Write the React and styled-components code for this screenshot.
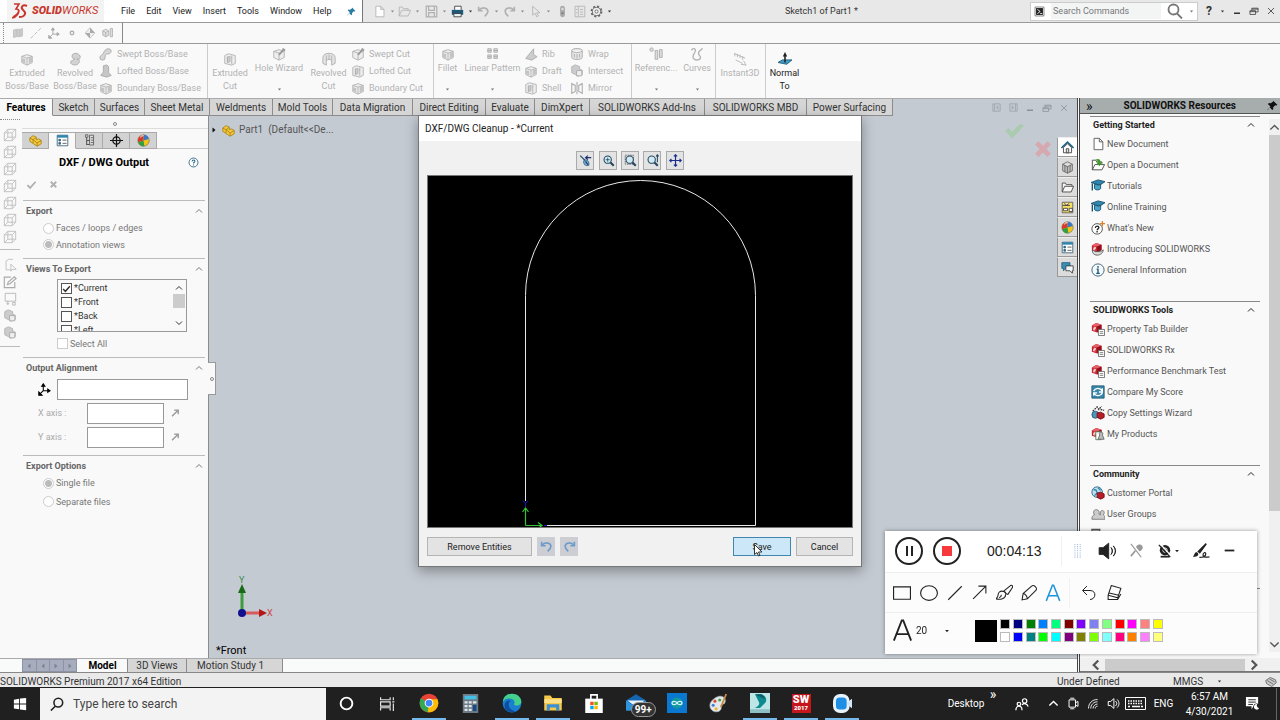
import React, { useState } from "react"
import styled, { createGlobalStyle } from 'styled-components'


const GlobalStyle = createGlobalStyle`
    * {
        box-sizing: border-box;
    }

    body {
        margin: 0;
        overflow: hidden;
        font-family: Roboto, "Open Sans", sans-serif;
        font-size: 9px;
        line-height: 12px;
        color: #222;
    }

    button, input, select {
        font: inherit;
        color: inherit;
        margin: 0;
    }

    button {
        padding: 0;
        border: 0;
        background: transparent;
    }

    h1, h2, h3, ul {
        margin: 0;
        padding: 0;
        font: inherit;
        list-style: none;
    }

    a {
        color: inherit;
        text-decoration: none;
    }

    svg {
        display: block;
        flex: none;
    }
`

/* ---------- icons, all on a 16 x 16 grid ---------- */

const line = { fill: 'none', stroke: 'currentColor', strokeWidth: 1 }

const cube = (
    <>
        <path d="M2 5l6-2 6 2v7l-6 3-6-3z" fill="#eee" stroke="#b0b0b0" />
        <path d="M2 5l6 2 6-2M8 7v8" fill="none" stroke="#b0b0b0" />
    </>
)

const viewCube = <path d="M1.500 5.500h9v9h-9zM5.500 1.500h9v9h-9zM1.500 5.500l4-4M10.500 5.500l4-4M10.500 14.500l4-4M1.500 14.500l4-4" fill="none" stroke="#bdbdbd" />

const redCube = (
    <>
        <path d="M1 4l5-3 6 2v6l-5 3-6-2z" fill="#c8202c" />
        <path d="M1 4l5-3 6 2-5 2z" fill="#e4606a" />
        <path d="M7 5v7l5-3V3z" fill="#8f0f1a" />
        <path d="M3 6h2v1.500h-2v1.500h2" fill="none" stroke="#fff" />
    </>
)

const magnifier = (
    <>
        <circle cx="7" cy="7" r="4.500" fill="#cfeaf5" stroke="#24475e" strokeWidth="1.300" />
        <path d="M10.500 10.500l4 4" stroke="#24475e" strokeWidth="2.600" />
    </>
)

const cap = (
    <>
        <path d="M0 4l8-3 8 2-6 4z" fill="#2f86ae" stroke="#17506c" />
        <path d="M4 6v5c2 2 5 2 7 0V6l-2 1z" fill="#4aa3c8" stroke="#17506c" />
        <path d="M1.500 5v8" stroke="#17506c" strokeWidth="1.500" />
    </>
)

const ball = (
    <>
        <circle cx="8" cy="8" r="7" fill="#f0c419" stroke="#555" strokeWidth=".6" />
        <path d="M8 8L8 1A7 7 0 0 0 1.500 10z" fill="#d93a2b" />
        <path d="M8 8L1.500 10A7 7 0 0 0 9 15z" fill="#2f9e44" />
        <path d="M8 8L8 1A7 7 0 0 1 14.500 6z" fill="#3b78c9" />
        <path d="M4 4a5 5 0 0 1 4-2" stroke="#fff" strokeWidth="1.200" fill="none" />
    </>
)

const part = (
    <>
        <path d="M1 5l4-3 4 2v3l3-1 3 2v4l-5 3-9-6z" fill="#f3c93b" stroke="#a87f12" />
        <path d="M1 5l4 2 4-3M5 7v4M10 15v-4l5-3M10 11l-5-4" fill="none" stroke="#a87f12" />
    </>
)

const propList = (
    <>
        <path d="M1.500 1.500h13v13h-13z" fill="#fff" stroke="#2c5871" />
        <path d="M1.500 1.500h13v3h-13z" fill="#2f86ae" />
        <path d="M3.500 6.500h2v2h-2zM3.500 10.500h2v2h-2z" fill="#2f86ae" stroke="#2c5871" />
        <path d="M8 7.500h5M8 11.500h5" stroke="#444" />
    </>
)

const shapes = {
    pin: <path d="M9 1l6 6-1 1-2-.5-3 3v3l-1.500 1L4 10.500 1 15l-.5-.5L5 9.500 1.500 6l1-1.500 3 .2L9 2z" fill="currentColor" />,
    doc: <path d="M3.500 1.500h6l4 4v9h-10zM9.500 1.500v4h4" fill="#fdfdfd" stroke="currentColor" />,
    open: <path d="M1.500 13.500v-11h4l1 2h6v2M1.500 13.500l3-7h11l-3 7z" {...line} />,
    save: <path d="M1.500 1.500h12l1 1v12h-13zM4.500 1.500v5h7v-5M4.500 14.500v-5h7v5" {...line} strokeWidth="1.500" />,
    print: (
        <>
            <path d="M4.500 6V1.500h8V6" fill="#fff" stroke="#333" />
            <path d="M1 6h14v6H1z" fill="#1e5a78" />
            <path d="M3.500 10.500h9v4h-9z" fill="#e8f4f8" stroke="#333" />
        </>
    ),
    undo: <path d="M2 2v5h5M2.500 6.500c3-4 10-4 11 1 0 3-1 4-4 6.500" {...line} strokeWidth="2" />,
    redo: <path d="M14 2v5H9M13.500 6.500c-3-4-10-4-11 1 0 3 1 4 4 6.500" {...line} strokeWidth="2" />,
    pointer: <path d="M4.500 1.500v11l3-2.500 2 4.500 2-1-2-4h4z" {...line} />,
    light: (
        <>
            <rect x="5" y="1" width="6" height="14" rx="3" fill="#aaa" />
            <circle cx="8" cy="5" r="1.500" fill="#ddd" />
            <circle cx="8" cy="10" r="1.500" fill="#888" />
        </>
    ),
    table: <path d="M2.500 1.500h12v13h-12zM6.500 1.500v13M8.500 5.500h4M8.500 8.500h4M8.500 11.500h4M3.500 5.500h2M3.500 9.500h2" {...line} />,
    gear: (
        <>
            <circle cx="8" cy="8" r="6.300" fill="none" stroke="#666" strokeWidth="2" strokeDasharray="2.600 2.348" />
            <circle cx="8" cy="8" r="5" fill="#f5f5f5" stroke="#555" />
            <circle cx="8" cy="8" r="2" fill="none" stroke="#555" />
        </>
    ),
    plane: <path d="M2 4l4-1v10l-4 1zM7 3h3v10H7zM11 3l3-1v10l-3 1z" fill="#ccc" stroke="#bbb" />,
    axis: <path d="M1 15L15 1" stroke="currentColor" strokeDasharray="5 2" />,
    triad: <path d="M6.500 9.500V2M4.500 4l2-3 2 3zM6.500 9.500h7M12 7.500l3 2-3 2zM6.500 9.500L2 14M1 11v4h4z" stroke="currentColor" strokeWidth="1.300" fill="currentColor" />,
    point: <circle cx="8" cy="8" r="2.500" fill="#eee" stroke="#aaa" strokeWidth="1.500" />,
    com: (
        <>
            <path d="M8 1l6.500 7L8 15 1.500 8z" fill="#eee" stroke="#bbb" />
            <path d="M8 1v7h6.500zM8 15V8H1.500z" fill="#aaa" />
        </>
    ),
    mate: <path d="M1 5l4-2 4 2v6l-4 2-4-2zM1 5l4 2 4-2M5 7v6M11 2h3v11h-3z" fill="#ddd" stroke="#aaa" />,
    boss: <>{cube}<path d="M2 7l4 1v5l-4-2zM10 6h4v5l-4 2z" fill="#c4c4c4" /></>,
    revolve: <path d="M5 3c3-3 9-1 9 3 0 2-2 3-4 2 3 0 4 3 2 5-2 3-9 2-9-1 0-3 3-2 5-4-3 0-4-2-3-5z" fill="#d3d3d3" stroke="#aaa" />,
    sweep: <path d="M1 12a3 3 0 0 0 6 0c0-3 0-4 3-4 5 0 5-6 1-6s-5 3-6 5c0 2-4 2-4 5z" fill="#d6d6d6" stroke="#aaa" />,
    loft: <path d="M5 2l4-1 2 2v7l3 3-5 2-7-2 3-4z" fill="#c6c6c6" stroke="#aaa" />,
    hole: <>{cube}<path d="M8 9l6-7M12 2l3 2" stroke="#999" strokeWidth="2" /></>,
    cut: (
        <>
            <path d="M2 4l4-2 8 2v9l-4 2-8-2z" fill="#eee" stroke="#b0b0b0" />
            <path d="M5 5v7M10 6v8M5 6l3-1v6l-3 1zM10 4v3" fill="#ccc" stroke="#b0b0b0" />
        </>
    ),
    revolveCut: (
        <>
            <path d="M1 6c0-6 14-6 14 0v7l-4 2v-5c0-2-6-2-6 0v5l-4-2z" fill="#e2e2e2" stroke="#b0b0b0" />
            <path d="M5 4v6M11 4v6M8 3v6" stroke="#b0b0b0" />
        </>
    ),
    curve: <path d="M2 4c0-3 5-3 4 1-1 3-4 5-2 8s8 2 8-1c0-2-3-3-2-6s4-2 4-5" {...line} strokeWidth="1.500" />,
    pattern: <path d="M2 2h4v4H2zM9 2h4v4H9zM2 9h4v4H2zM9 9h4v4H9zM2 4h4M9 4h4M2 11h4M9 11h4" fill="#ddd" stroke="#aaa" />,
    rib: <path d="M2 13l9-11v7l4 2-6 4z" fill="#ccc" stroke="#aaa" />,
    wrap: <path d="M2 4c0-3 12-3 12 0v8c0 3-12 3-12 0zM2 4c0 3 12 3 12 0M5 8v4M8 8v5M11 8v4" fill="#e5e5e5" stroke="#aaa" />,
    mirror: <path d="M2 3l4 2v7l-4 2zM14 3l-4 2v7l4 2zM8 1v14" fill="none" stroke="#b0b0b0" strokeWidth="1.300" />,
    refGeo: <path d="M1 3a2 2 0 1 0 4 0 2 2 0 1 0-4 0M7 4h3v10H7zM12 3h3v9h-3z" fill="#ddd" stroke="#aaa" />,
    instant: <path d="M2 2l12 5M2 5V1M5 6V2M8 7V3M11 9V5M3 9l8 4M12 10l3 5-6-1" {...line} />,
    normalTo: (
        <>
            <path d="M0 12l5-3h11l-6 5z" fill="#3e9bc6" stroke="#1c5b7c" />
            <path d="M8 12V3" stroke="#222" strokeWidth="1.800" />
            <path d="M5.500 5L8 0l2.500 5z" fill="#222" />
        </>
    ),
    viewCube,
    sketchTool: <path d="M3.500 13.500v-10l3-2h5M3.500 13.500h6M9 7v8l2-2h4z" fill="none" stroke="#bdbdbd" />,
    edit: <path d="M13.500 8v6.500h-12v-12H9M5 11l1-3 7-6 2 2-7 6z" fill="none" stroke="#aaa" strokeWidth="1.300" />,
    hang: <path d="M2.500 1.500h12v9h-12zM5.500 10v4M4 12.500l1.500 2 1.500-2M11 12h3v3h-3z" fill="none" stroke="#b5b5b5" />,
    blocks: (
        <>
            <path d="M2 3l4-2 5 2v3l3 1v5l-5 2-3-2-4-2z" fill="#ccc" stroke="#b0b0b0" />
            <path d="M7.500 7.500h6v6h-6z" fill="#eee" stroke="#aaa" />
        </>
    ),
    part,
    propList,
    tree: (
        <>
            <path d="M3 1h3v3H3zM8 1.500h5v12H8z" fill="#ddd" stroke="#555" />
            <path d="M4.500 4v9H8M4.500 8H8" fill="none" stroke="#555" strokeWidth="1.300" />
            <path d="M9.500 4.500h3M9.500 7.500h3M9.500 10.500h3" stroke="#555" />
        </>
    ),
    target: (
        <>
            <circle cx="8" cy="8" r="4.500" fill="none" stroke="#111" strokeWidth="1.500" />
            <path d="M8 0v16M0 8h16" stroke="#111" strokeWidth="1.500" />
        </>
    ),
    ball,
    help: (
        <>
            <circle cx="8" cy="8" r="6.500" fill="#fff" stroke="#2b6680" strokeWidth="1.300" />
            <path d="M6 6.500c0-3 4.500-2.500 4 0-.3 1.200-2 1.200-2 3M8 11v1.300" {...line} stroke="#2b6680" strokeWidth="1.600" />
        </>
    ),
    check: <path d="M2 9l4 4 8-9" {...line} strokeWidth="2.600" />,
    bigCheck: <path d="M0 8l3-2 3 3 7-7 3 2-10 11z" fill="currentColor" />,
    cross: <path d="M4 4l8 8M12 4l-8 8" {...line} strokeWidth="2.600" />,
    bigCross: <path d="M1 4l3-3 4 4 4-4 3 3-4 4 4 4-3 3-4-4-4 4-3-3 4-4z" fill="currentColor" />,
    up: <path d="M2 11l6-6 6 6" {...line} strokeWidth="2" />,
    down: <path d="M2 5l6 6 6-6" {...line} strokeWidth="2" />,
    left: <path d="M11 2L5 8l6 6" {...line} strokeWidth="3" />,
    right: <path d="M5 2l6 6-6 6" {...line} strokeWidth="3" />,
    caret: <path d="M3 5h10l-5 6z" fill="currentColor" />,
    play: <path d="M5 3v10l6-5z" fill="currentColor" />,
    flip: <path d="M3 12l8-8M6 3h6v6" {...line} strokeWidth="2" />,
    min: <path d="M2 12.500h12" stroke="currentColor" strokeWidth="3" />,
    dash: <path d="M1 8h14" stroke="currentColor" strokeWidth="2.600" />,
    restore: <path d="M1.500 7.500h9v6h-9zM4.500 7V3.500h10v6H11M1.500 9h9M4.500 5h10" {...line} strokeWidth="1.200" />,
    close: <path d="M2 2l12 12M14 2L2 14" {...line} strokeWidth="1.600" />,
    paneLeft: <path d="M1.500 1.500h13v13h-13zM4.500 2v12M10.500 5L7.500 8l3 3z" {...line} />,
    paneRight: <path d="M1.500 1.500h13v13h-13zM11.500 2v12M5.500 5l3 3-3 3z" {...line} />,
    search: <path d="M1.500 6.500a5 5 0 1 0 10 0 5 5 0 1 0-10 0M10 10.500l5 5" {...line} strokeWidth="1.800" />,
    console: (
        <>
            <path d="M1.500 1.500h13v13h-13z" fill="#fff" stroke="#555" />
            <path d="M3 3h10v10H3z" fill="#222" />
            <path d="M5 5l4 3-4 3M9 11h3" stroke="#fff" strokeWidth="1.300" fill="none" />
        </>
    ),
    home: (
        <>
            <path d="M3 8v6.500h10V8L8 3.500z" fill="#fff" stroke="#333" />
            <path d="M0.500 8.500L8 1.500l7.500 7" {...line} stroke="#1f6584" strokeWidth="2" />
            <path d="M6.500 9.500h3v5h-3z" fill="#ddd" stroke="#333" />
        </>
    ),
    library: <path d="M2 4l6-3 6 3v8l-6 3-6-3zM2 4l6 3 6-3M8 7v8M4 5v8M6 6v8M10 6v8M12 5v8" fill="#ddd" stroke="#444" strokeWidth=".8" />,
    folder: <path d="M1.500 13.500v-11h4l1 2h7v2M1.500 13.500l3-7h11l-3 7z" fill="#f7f7f7" stroke="#555" strokeWidth="1.200" />,
    palette: (
        <>
            <path d="M1.500 1.500h13v13h-13z" fill="#f6df62" stroke="#555" />
            <path d="M2 5.500h9M4 3l3 2 3-2M3 9h5v3H3zM10 9h4v4h-4z" fill="#fff" stroke="#333" />
        </>
    ),
    chat: (
        <>
            <path d="M1 2h10v7H6l-3 3V9H1z" fill="#3b8fb5" stroke="#1c5b7c" />
            <path d="M6 6h9v6h-1v3l-3-3H6z" fill="#eef7fa" stroke="#333" />
        </>
    ),
    openArrow: (
        <>
            <path d="M1.500 13.500v-11h4l1 2h6v2M1.500 13.500l3-6h11l-3 6z" fill="#fff" stroke="#444" />
            <path d="M5 2c4-2 6 0 6 3h2L9.500 9 6 5h2c0-2-1-2-3-3z" fill="#3f9b28" />
        </>
    ),
    cap,
    whatsNew: (
        <>
            <circle cx="7" cy="9" r="6" fill="#fff" stroke="#444" />
            <path d="M5 8c0-3 4-2.500 4-.5 0 1.500-2 1.500-2 3M7 11.500v1.500" {...line} stroke="#222" strokeWidth="1.500" />
            <path d="M13 0v6M10 3h6" stroke="#d9822b" strokeWidth="1.500" />
        </>
    ),
    introCube: (
        <>
            {redCube}
            <path d="M2 9c-1 3 1 6 5 6s7-3 7-6l-3 2H5z" fill="#ddd" stroke="#555" />
        </>
    ),
    info: (
        <>
            <circle cx="8" cy="8" r="7" fill="#f3f9fc" stroke="#33566b" />
            <path d="M6.500 7H8v4.500M6 11.800h4M8 3.500v1.800" {...line} stroke="#1d5a7c" strokeWidth="1.600" />
        </>
    ),
    toolCube: (
        <>
            {redCube}
            <path d="M8.500 8.500h7v7h-7z" fill="#fff" stroke="#666" />
            <path d="M10 11h4M10 13h4" stroke="#777" />
        </>
    ),
    score: (
        <>
            <path d="M1 1h14v14H1z" fill="#3b87ab" stroke="#1d5873" />
            <path d="M3 7c2-4 7-4 9-1l1-2v4H9M13 9c-2 4-7 4-9 1l-1 2V9h4" fill="none" stroke="#fff" strokeWidth="1.500" />
        </>
    ),
    wizard: (
        <>
            <path d="M2 6l5-5 2 3 3-4M11 4l4 1" stroke="#333" strokeWidth="1.500" strokeDasharray="2 1" fill="none" />
            <circle cx="5" cy="10" r="4" fill="#4a97ba" stroke="#225a75" />
            <path d="M7 8l4-1 4 2v4l-4 2-4-2z" fill="#b51d28" stroke="#7d0d16" />
        </>
    ),
    products: (
        <>
            {redCube}
            <path d="M5.500 5.500h6v9h-6z" fill="#fff" stroke="#4d7d4d" />
            <path d="M10 9a2 2 0 1 1 3 0l2 5H8z" fill="#bbb" stroke="#666" />
        </>
    ),
    portal: (
        <>
            <circle cx="7" cy="7" r="6" fill="#bfe0ee" stroke="#235f7d" />
            <path d="M3 4l3 1 1 3-3 3M8 2l3 3" stroke="#2f86ae" strokeWidth="1.600" fill="none" />
            <path d="M7 8l4-1 4 2v4l-4 2-4-2z" fill="#b51d28" stroke="#7d0d16" />
        </>
    ),
    users: <path d="M1 14c0-4 2-5 3-5-2-3-1-6 2-6s4 3 3 5l2 1c-1-3 0-5 2-5s3 3 1 5c2 1 2 3 2 5z" fill="#ccc" stroke="#777" />,
    board: <path d="M1 1.500h9v10H1zM1 3.500h9" fill="#eee" stroke="#555" strokeWidth="1.400" />,
    broom: (
        <>
            <path d="M1.500 2l7 7" stroke="#1d4f74" strokeWidth="1.600" />
            <path d="M6 8c4-2 7 1 6 6-4 1-7-1-6-6z" fill="#7fb7d8" stroke="#1d4f74" />
            <path d="M8 9l3 4M8 4.500h7M11 2L8 4.500 11 7" fill="none" stroke="#1b2f6b" strokeWidth="1.400" />
        </>
    ),
    zoomFit: <>{magnifier}<path d="M4.500 7h5M7 4.500v5" stroke="#24475e" /></>,
    zoomArea: <><path d="M1.500 1.500h10v11h-10z" fill="none" stroke="#555" strokeDasharray="2 1" />{magnifier}</>,
    zoomInOut: <>{magnifier}<path d="M14 1v9M12.500 3L14 1l1.500 2" stroke="#24475e" fill="none" strokeWidth="1.300" /></>,
    pan: <path d="M8 1v14M1 8h14M6 3l2-2 2 2M6 13l2 2 2-2M3 6L1 8l2 2M13 6l2 2-2 2" fill="none" stroke="#1b2f8f" strokeWidth="1.500" />,
    rect: <path d="M0.500 2.500h15v11h-15z" {...line} />,
    ellipse: <ellipse cx="8" cy="8" rx="7.500" ry="6.500" {...line} />,
    diagonal: <path d="M2 14L14 2" {...line} />,
    arrow: <path d="M2 14L14 2M7 2h7v7" {...line} />,
    brush: <path d="M7 7l6-5c2-2 3.500 0 2 2L11 10M7 7l4 3M7 7c-3-1-5 1-5 3s-1 3-2 4c4 1 9 0 9-4M7 7c2 0 2.500 1.500 2 3M5 10c0 2-1 2-2 3" {...line} />,
    pencil: <path d="M1 15l1-6 8-7c2-2 6 2 4 4l-8 8zM2 9c2 0 4 3 4 5" {...line} />,
    text: <path d="M2 15L7.500 1h1L14 15M4 10.500h8" {...line} strokeWidth="1.300" />,
    back: <path d="M6 1L1.500 5.500 6 10M2 5.500h7c7 0 6 9 0 9" {...line} />,
    eraser: <path d="M5 1.500l9 2.500-3 9-9-2.500zM3 8.500l9 2M2 10.500v4h9l3-5M11 13v1.500" {...line} />,
    speaker: <path d="M1 5h3.500l5-4v14l-5-4H1zM11.500 5c1.500 1.500 1.500 4.500 0 6h.2c1.500-1.500 1.500-4.500 0-6zM13.500 3.500c2.500 3 2.500 6 0 9h.2c2.500-3 2.500-6 0-9z" fill="currentColor" stroke="currentColor" strokeWidth=".8" />,
    waves: <path d="M1.500 5.500h3l4-3.500v12l-4-3.500h-3zM10.500 5c2 2 2 4 0 6M12.500 3c3 3 3 7 0 10" {...line} strokeWidth="1.200" />,
    micOff: (
        <>
            <path d="M7 8c-1-6 5-8 7-5s-1 6-4 6z" fill="currentColor" />
            <path d="M7 8l-5 6" stroke="currentColor" strokeWidth="1.800" />
            <path d="M3 1l11 14" stroke="#fff" strokeWidth="3" />
            <path d="M2 1l11 14" stroke="currentColor" strokeWidth="1.200" />
        </>
    ),
    camOff: (
        <>
            <circle cx="8" cy="7" r="6" fill="currentColor" />
            <path d="M3 14.500h10" stroke="currentColor" strokeWidth="2" />
            <circle cx="8" cy="7" r="2.500" fill="none" stroke="#fff" />
            <path d="M2.500 0l13 14" stroke="#fff" strokeWidth="1.500" />
            <path d="M1 1l13 14" stroke="currentColor" strokeWidth="1.500" />
        </>
    ),
    sign: (
        <>
            <path d="M0 14l2-4c2-1 3 0 3 2-1 2-3 2-5 2zM4 9l8-8 1 1-6.500 9z" fill="currentColor" />
            <path d="M6 14.500c4 0 6-1 6-3.500 0-2-3-1-2.500 1.500s3 2 6 1.500" {...line} strokeWidth="1.100" />
        </>
    ),
    grip: <path d="M4.500 0v16M7.500 0v16M10.500 0v16" fill="none" stroke="#a3bde0" strokeWidth="1.200" strokeDasharray="1.200 1.200" />,
    windows: <path d="M1 3l6-1v5.500H1zM8 1.800L15 1v6.500H8zM1 8.500h6V14l-6-1zM8 8.500h7V15l-7-.8z" fill="#fff" />,
    ring: <circle cx="8" cy="8" r="5.500" fill="none" stroke="#fff" strokeWidth="1.800" />,
    taskView: <path d="M1.500 2v2.500h9V2M1.500 6.500h9v4h-9zM1.500 14.500V12h9v2.500M13.500 2v3M13.500 8v7M12.500 6.500h2" fill="none" stroke="#e5e5e5" strokeWidth="1.100" />,
    chrome: (
        <>
            <circle cx="8" cy="8" r="7.500" fill="#ea4335" />
            <path d="M8 8L1.500 4.200A7.500 7.500 0 0 0 7 15.400z" fill="#34a853" />
            <path d="M8 8l-1 7.400A7.500 7.500 0 0 0 14.800 5H8z" fill="#fbbc05" />
            <circle cx="8" cy="8" r="3.500" fill="#fff" />
            <circle cx="8" cy="8" r="2.700" fill="#4285f4" />
        </>
    ),
    calc: (
        <>
            <rect x="1.500" y="0" width="13" height="16" fill="#6d7a85" />
            <path d="M3 1.500h10v3H3z" fill="#43c0e8" />
            <path d="M3 6h2.500v2H3zM6.500 6H9v2H6.500zM10 6h3v2h-3zM3 9.200h2.500v2H3zM6.500 9.200H9v2H6.500zM3 12.400h2.500v2H3zM6.500 12.400H9v2H6.500z" fill="#dfe6ea" />
            <path d="M10 9.200h3v5.200h-3z" fill="#164a84" />
        </>
    ),
    edge: (
        <>
            <circle cx="8" cy="8" r="7.500" fill="#1b7fd1" />
            <path d="M.6 7C1.500 2 5 .5 8 .5c5 0 7.500 3.500 7.500 6.500s-5 4-6 2c1-1 1-4-2.500-4.500C4 4 2 5 .6 7z" fill="#45cf8c" />
            <path d="M7 6c-3 2-2 8 4 8.500A7.500 7.500 0 0 1 3 13.500C.5 9 3 5.500 7 6z" fill="#0d4f9e" />
        </>
    ),
    explorer: (
        <>
            <path d="M1 2h5l1.500 2H15v10H1z" fill="#f7c948" />
            <path d="M1 5h14v3H1z" fill="#fbe08a" />
            <path d="M3 14V9h10v5h-2.500v-2.500h-5V14z" fill="#3b8fd6" />
        </>
    ),
    store: (
        <>
            <path d="M5.500 5V1.500h5V5" fill="none" stroke="#fff" strokeWidth="1.300" />
            <path d="M1 4.500h14V16H1z" fill="#fff" />
            <path d="M5 7h2.700v2.700H5z" fill="#f25022" />
            <path d="M8.300 7H11v2.700H8.300z" fill="#7fba00" />
            <path d="M5 10.300h2.700V13H5z" fill="#00a4ef" />
            <path d="M8.300 10.300H11V13H8.300z" fill="#ffb900" />
        </>
    ),
    mail: (
        <>
            <path d="M0 6l8-5 8 5v8H0z" fill="#1566b0" />
            <path d="M1 6l7 5 7-5z" fill="#e9f3fb" />
            <path d="M0 6l8 5.500L16 6v8H0z" fill="#2b95e0" />
        </>
    ),
    arduino: (
        <>
            <path d="M0 0h16v16H0z" fill="#0a78d0" />
            <circle cx="8" cy="8" r="4.500" fill="#12999f" />
            <path d="M8 8c-1-1.700-4-1.700-4 0s3 1.700 4 0 4-1.700 4 0-3 1.700-4 0z" fill="none" stroke="#d4f3f3" strokeWidth="1" />
        </>
    ),
    paint: (
        <>
            <path d="M8 2c5-1 7 3 5 6-1 1-3 0-3 2 1 3-1 5-4 5-4 0-6-4-5-7s4-5 7-6z" fill="#e4e9ee" stroke="#b3bfc8" strokeWidth=".5" />
            <circle cx="5" cy="6" r="1.300" fill="#e2483c" />
            <circle cx="9" cy="5" r="1.300" fill="#3fa648" />
            <circle cx="3.500" cy="9.500" r="1.300" fill="#3f7fd6" />
            <circle cx="6" cy="12.500" r="1.300" fill="#f0b429" />
            <path d="M14.500 0L10 11" stroke="#c98a44" strokeWidth="1.500" />
        </>
    ),
    max: (
        <>
            <path d="M0 0h16v16H0z" fill="#bfe6e6" />
            <path d="M4 1h5c4 1 5 5 3 7l-4 4H4c3-2 4-3 3-5S5 3 4 1z" fill="#0f8a8f" />
            <path d="M4 1h5c2 1 3 3 3 4-3-2-5-2-8-4z" fill="#0a5f66" />
            <path d="M0 13h16v3H0z" fill="#8dbfc4" />
        </>
    ),
    camera: (
        <>
            <rect x="0" y="0" width="14" height="16" rx="6" fill="#e8f2fb" />
            <rect x="2.500" y="3" width="9" height="10" rx="3" fill="#1f8fe6" />
            <path d="M12 7l4-3v8l-4-3z" fill="#d5e6f5" />
        </>
    ),
    people: <path d="M8.500 4.500a2.500 2.500 0 1 0 5 0 2.500 2.500 0 1 0-5 0M2.500 8a2 2 0 1 0 4 0 2 2 0 1 0-4 0M1 15c0-6 7-6 7 0M8 9c2-2 6-2 7 2" {...line} strokeWidth="1.400" />,
    device: <path d="M2.500 3.500h8v9h-8zM10.500 7l3-1.500v6l-3-1.500M4 1.500h5M4 14.500h5" {...line} strokeWidth="1.200" />,
    wifi: <path d="M2 14C2 7 7 2 14 2M5 14c0-5 4-9 9-9M8 14c0-3 3-6 6-6M11 14c0-2 1-3 3-3" {...line} strokeWidth="1.200" />,
    note: (
        <>
            <path d="M1 1h13v10H9l-2 3v-3H1z" fill="#fff" />
            <path d="M3.500 4h8M3.500 6.500h8M3.500 9h5" stroke="#222" />
            <circle cx="12.500" cy="11.500" r="3.500" fill="#222" />
            <path d="M13 8.500a3 3 0 1 0 2 4.500 3 3 0 0 1-2-4.500z" fill="#fff" />
        </>
    ),
    tag: <path d="M1 6l6-4 7 3 1 4-6 5-7-4zM3 6l8 5M6 4l7 4" fill="#ccc" stroke="#555" />,
}

const Icon = ({ name, size = 12, color }) => (
    <svg width={size} height={size} viewBox="0 0 16 16" color={color} aria-hidden="true">
        {shapes[name]}
    </svg>
)

/* ---------- window frame ---------- */

const Page = styled.div`
    height: 100vh;
    display: flex;
    flex-direction: column;
    background-color: #f9f9f9;
`

const TitleBar = styled.header`
    height: 23px;
    flex: none;
    display: flex;
    align-items: center;
    background-color: #e8e8e8;
    border-bottom: 1px solid #9a9a9a;
`

const MenuArea = styled.div`
    align-self: stretch;
    display: flex;
    align-items: center;
    width: 363px;
    padding-left: 7px;
    background-color: #fff;
    border-right: 1px solid #777;
`

const Logo = styled.div`
    display: flex;
    align-items: center;
    gap: 3px;
    width: 97px;
    align-self: stretch;
    padding-left: 4px;
    background-color: #f3f3f3;
    color: #c8372d;
    font-size: 11px;
    font-style: italic;

    b {
        font-weight: 900;
    }
`

const MenuBar = styled.nav`
    display: flex;
    gap: 11px;
    margin-left: 17px;
    flex: 1;
`

const MenuItem = styled.button`
    color: #222;
`

const PinSlot = styled.div`
    margin-right: 6px;
`

const QuickTools = styled.div`
    display: flex;
    flex: 1;
    align-items: center;
    padding-left: 10px;
    color: #b0b0b0;
`

const QuickButton = styled.button`
    width: ${props => props.$w}px;
    height: 18px;
    display: flex;
    align-items: center;
    gap: 4px;
`

const DocTitle = styled.h1`
    width: 245px;
    color: #333;
`

const SearchBox = styled.div`
    width: 168px;
    height: 19px;
    display: flex;
    align-items: center;
    gap: 6px;
    padding: 0 3px;
    background-color: #fff;
    border: 1px solid #ccc;

    input {
        flex: 1;
        width: 40px;
        height: 16px;
        padding: 0 2px;
        border: 0;
        background-color: #f3f5f5;
    }

    input::placeholder {
        color: #777;
        opacity: 1;
    }
`

const WindowButtons = styled.div`
    display: flex;
    align-items: center;
    gap: 8px;
    padding: 0 ${props => props.$end}px 0 8px;
    color: ${props => props.$color};
`

const HelpMark = styled.button`
    font-size: 12px;
    font-weight: 700;
`

const ToolStrip = styled.div`
    height: 21px;
    flex: none;
    display: flex;
    border-bottom: 1px solid #9a9a9a;
`

const ToolGroup = styled.div`
    width: 120px;
    margin-left: 3px;
    padding-left: 8px;
    display: flex;
    align-items: center;
    gap: 6px;
    color: #aaa;
    border-left: 1px dotted #888;
    border-right: 1px solid #888;
`

/* ---------- ribbon ---------- */

const Ribbon = styled.div`
    height: 54px;
    flex: none;
    display: flex;
    color: #b2b2b2;
`

const RibbonGroup = styled.div`
    width: ${props => props.$w}px;
    padding-left: ${props => props.$pad || 0}px;
    display: flex;
    border-right: 1px solid #ccc;
`

const BigButton = styled.button`
    width: ${props => props.$w}px;
    height: 49px;
    display: flex;
    flex-direction: column;
    align-items: center;
    padding-top: ${props => props.$menu ? 3 : 8}px;
    line-height: 13px;
    color: ${props => props.$on ? '#222' : 'inherit'};
    white-space: nowrap;

    svg {
        margin-bottom: 1px;
    }
`

const MenuCaret = styled.span`
    margin-top: auto;
    color: #777;
`

const SmallColumn = styled.div`
    width: ${props => props.$w}px;
    padding-top: 1px;
    display: flex;
    flex-direction: column;
`

const SmallButton = styled.button`
    height: 17px;
    display: flex;
    align-items: center;
    gap: 4px;
    white-space: nowrap;
`

/* ---------- workspace ---------- */

const Workspace = styled.main`
    position: relative;
    flex: 1;
    min-height: 0;
    display: flex;
`

const Editor = styled.div`
    flex: 1;
    min-width: 0;
    display: flex;
    flex-direction: column;
    background-color: #c4cad2;
    border-top: 1px solid #aaa;
`

const TabRow = styled.div`
    height: 17px;
    flex: none;
    display: flex;
    align-items: stretch;
`

const Tab = styled.button`
    width: ${props => props.$w}px;
    flex: none;
    padding: 1px ${props => props.$end || 0}px 0 0;
    font-size: 10px;
    font-weight: ${props => props.$on ? 700 : 400};
    color: ${props => props.$on ? '#000' : '#333'};
    background-color: ${props => props.$on ? '#f9f9f9' : '#d6d6d6'};
    border-right: 1px solid #8c8c8c;
    border-bottom: 1px solid ${props => props.$on ? '#f9f9f9' : '#8c8c8c'};
    white-space: nowrap;
`

const Spacer = styled.div`
    flex: 1;
`

const Body = styled.div`
    flex: 1;
    min-height: 0;
    display: flex;
`

const Rail = styled.div`
    width: 22px;
    flex: none;
    background-color: #f9f9f9;
    padding-top: 3px;
`

const RailGroup = styled.div`
    width: 20px;
    display: flex;
    flex-direction: column;
    align-items: center;
    padding-top: 8px;
    gap: 3px;
    border-top: 1px ${props => props.$dotted ? 'dotted #888' : 'solid #bbb'};

    & + & {
        margin-top: 5px;
        padding-bottom: 6px;
        border-bottom: 1px solid #bbb;
    }
`

const Panel = styled.aside`
    width: 187px;
    flex: none;
    background-color: #f9f9f9;
    border-right: 1px solid #8c8c8c;
    color: #777;
`

const PanelGrip = styled.div`
    height: 13px;
    padding-top: 3px;
    display: flex;
    align-items: center;
    justify-content: center;
    border-bottom: 1px solid #ddd;
`

const Dot = styled.span`
    width: 4px;
    height: 4px;
    border: 1px solid #888;
    border-radius: 50%;
`

const PanelTabs = styled.div`
    height: 20px;
    display: flex;
    padding-top: 3px;
    border-bottom: 1px solid #ccc;
`

const PanelTab = styled.button`
    width: 27px;
    height: 17px;
    display: flex;
    align-items: center;
    justify-content: center;
    background-color: ${props => props.$on ? '#f9f9f9' : '#d2d2d2'};
    border: 1px solid #aaa;
    border-left: 0;
    border-bottom-color: ${props => props.$on ? '#f9f9f9' : '#aaa'};
`

const PanelTitle = styled.div`
    height: 26px;
    display: flex;
    align-items: center;
    padding: 1px 9px 0 0;

    h2 {
        flex: 1;
        padding-right: 2px;
        text-align: center;
        font-size: 11px;
        font-weight: 700;
        color: #000;
    }
`

const ConfirmRow = styled.div`
    height: 25px;
    display: flex;
    align-items: flex-start;
    gap: 11px;
    padding: 4px 0 0 4px;
    color: #b0b0b0;
`

const Section = styled.section`
    margin: 0 3px 0 1px;
    height: ${props => props.$h}px;
    border-top: 1px solid #bbb;
`

const SectionHead = styled.div`
    height: 19px;
    display: flex;
    align-items: center;
    justify-content: space-between;
    padding: 1px 2px 0 3px;

    h3 {
        font-weight: 700;
        color: #666;
    }
`

const Choice = styled.label`
    height: ${props => props.$h}px;
    display: flex;
    align-items: center;
    gap: 2px;
    padding-left: ${props => props.$pad}px;
    color: ${props => props.$dark ? '#333' : '#777'};

    input {
        appearance: none;
        flex: none;
        width: 11px;
        height: 11px;
        background-color: #fff;
        border: 1px solid ${props => props.$dark ? '#555' : '#ccc'};
    }

    input[type="radio"] {
        border-radius: 50%;
    }

    input[type="radio"]:checked {
        background: radial-gradient(circle, #bbb 3px, #fff 4px);
    }
`

const TickBox = styled.span`
    position: relative;
    display: flex;

    svg {
        position: absolute;
        left: 1px;
        top: 1px;
        pointer-events: none;
    }
`

const ViewList = styled.div`
    height: 53px;
    display: flex;
    margin: 1px 18px 5px 34px;
    padding-top: 1px;
    border: 1px solid #999;
    overflow: hidden;

    ul {
        flex: 1;
    }
`

const ListScroll = styled.div`
    width: 15px;
    display: flex;
    flex-direction: column;
    align-items: center;
    justify-content: space-between;
    padding: 3px 0 4px;
    color: #333;
`

const ListThumb = styled.div`
    width: 12px;
    height: 14px;
    margin-bottom: 10px;
    background-color: #ccc;
`

const Field = styled.label`
    height: 24px;
    display: flex;
    align-items: center;
    padding-left: 14px;
    color: #999;

    input {
        height: 21px;
        width: ${props => props.$w}px;
        border: 1px solid #999;
        background-color: #fff;
    }

    > svg:last-child {
        margin-left: 6px;
    }
`

const FieldName = styled.span`
    width: ${props => props.$w}px;
    padding-left: 1px;
    color: #aaa;

    svg {
        color: #000;
    }
`

const Viewport = styled.section`
    position: relative;
    flex: 1;
    min-width: 0;
    display: flex;
    justify-content: space-between;
`

const FeatureTree = styled.div`
    display: flex;
    align-items: center;
    align-self: flex-start;
    gap: 4px;
    height: 28px;
    padding-left: 1px;
    color: #555;
    font-size: 10px;
    white-space: pre;
`

const SplitGrip = styled.div`
    position: absolute;
    left: -1px;
    top: 246px;
    width: 8px;
    height: 33px;
    display: flex;
    align-items: center;
    justify-content: center;
    background-color: #f9f9f9;
    border: 1px solid #999;
    border-left: 0;
`

const AxisMark = styled.svg`
    position: absolute;
    left: 22px;
    bottom: 37px;
`

const ViewName = styled.div`
    position: absolute;
    left: 7px;
    bottom: 0;
    font-size: 11px;
    color: #000;
    line-height: 14px;
`

const Confirm = styled.button`
    position: absolute;
    right: ${props => props.$right}px;
    top: ${props => props.$top}px;
`

const SideTabs = styled.div`
    margin-top: 21px;
    width: 20px;
`

const SideTab = styled.button`
    width: 20px;
    height: 20px;
    display: flex;
    align-items: center;
    justify-content: center;
    background-color: ${props => props.$on ? '#fff' : '#dcdcdc'};
    border: 1px solid #999;
    border-top-color: #eee;
    border-right: 0;
`

const SheetRow = styled.div`
    height: 14px;
    flex: none;
    display: flex;
    padding-left: 22px;
    background-color: #f9fbfb;
    border-top: 1px solid #aaa;

    ${Tab} {
        border-bottom: 0;
    }
`

const SheetNav = styled.div`
    display: flex;
    width: 55px;
    margin-right: 1px;
    padding: 1px;
    gap: 1px;
    background-color: #8d92a6;

    button {
        flex: 1;
        display: flex;
        align-items: center;
        justify-content: center;
        background-color: #a8adbd;
        color: #7b8199;
    }

    button:nth-child(-n + 2) svg {
        transform: scaleX(-1);
    }
`

/* ---------- task pane ---------- */

const TaskPane = styled.aside`
    width: 203px;
    flex: none;
    display: flex;
    flex-direction: column;
    border-left: 3px double #444;
    background-color: #f9f9f9;
`

const PaneHeader = styled.div`
    height: 16px;
    flex: none;
    display: flex;
    align-items: center;
    justify-content: space-between;
    padding: 0 2px 0 6px;
    background-color: #a7adad;
    border-bottom: 1px solid #555;
    color: #111;

    h2 {
        font-size: 10px;
        font-weight: 700;
    }

    span {
        font-size: 14px;
    }
`

const PaneBody = styled.div`
    flex: 1;
    min-height: 0;
    display: flex;
    padding-top: 2px;
`

const PaneList = styled.div`
    flex: 1;
    overflow: hidden;
    padding: 0 9px 0 10px;
`

const PaneSection = styled.section`
    height: ${props => props.$h}px;
    border-top: 1px solid #888;
`

const PaneHead = styled.div`
    height: 16px;
    display: flex;
    align-items: center;
    justify-content: space-between;
    padding: 0 5px 0 3px;

    h3 {
        font-weight: 700;
        color: #222;
    }
`

const ResourceLink = styled.a`
    height: 21px;
    display: flex;
    align-items: center;
    gap: 2px;
    padding-left: 1px;
    color: #555;
    white-space: nowrap;
`

const ScrollY = styled.div`
    width: 11px;
    margin: 3px 0 6px;
    display: flex;
    flex-direction: column;
    align-items: center;
    background-color: #f0f0f0;
    color: #555;

    button {
        height: 16px;
        display: flex;
        align-items: center;
    }
`

const ThumbY = styled.div`
    align-self: stretch;
    flex: 376;
    background-color: #cbcbcb;
`

const ScrollRest = styled.div`
    flex: 125;
`

const ScrollX = styled.div`
    height: 14px;
    flex: none;
    display: flex;
    align-items: center;
    gap: 3px;
    padding: 0 20px 0 10px;
    border-bottom: 1px solid #777;
    color: #555;
    background-color: #f0f0f0;
`

const ThumbX = styled.div`
    flex: 1;
    height: 12px;
    background-color: #cbcbcb;
`

/* ---------- cleanup dialog ---------- */

const Dialog = styled.div`
    position: absolute;
    top: 17px;
    left: calc(50% - 222px);
    width: 444px;
    display: flex;
    flex-direction: column;
    background-color: #f1f1f1;
    border: 1px solid #777;
    box-shadow: 0 4px 12px rgba(0, 0, 0, .35);
`

const DialogTitle = styled.h2`
    height: 25px;
    padding: 0 6px;
    line-height: 25px;
    font-size: 10px;
    color: #222;
    background-color: #fff;
`

const DialogTools = styled.div`
    display: flex;
    justify-content: center;
    gap: 4px;
    padding: 10px 20px 5px 0;

    button:first-child, button:nth-child(4) {
        margin-right: 1px;
    }
`

const ToolButton = styled.button`
    width: 18px;
    height: 19px;
    display: flex;
    align-items: center;
    justify-content: center;
    background-color: ${props => props.$flat ? '#ccced3' : '#e3e3e3'};
    border: 1px solid ${props => props.$flat ? '#ccced3' : '#aaa'};
`

const Drawing = styled.svg`
    margin: 0 8px;
    background-color: #000;
    border: 1px solid #777;
`

const DialogActions = styled.div`
    display: flex;
    align-items: center;
    gap: 5px;
    padding: 9px 8px 10px;
`

const DialogButton = styled.button`
    width: ${props => props.$w}px;
    height: 19px;
    position: relative;
    color: #222;
    background-color: ${props => props.$on ? '#cce8f8' : '#e3e3e3'};
    border: 1px solid ${props => props.$on ? '#3f86b0' : '#b5b5b5'};
`

const Cursor = styled.svg`
    position: absolute;
    left: 20px;
    top: 6px;
`

/* ---------- recorder ---------- */

const Recorder = styled.div`
    position: fixed;
    right: 23px;
    bottom: 66px;
    width: 372px;
    background-color: #fcfcfc;
    box-shadow: 0 0 4px rgba(0, 0, 0, .4);
    color: #222;
`

const RecorderRow = styled.div`
    height: ${props => props.$h}px;
    display: flex;
    align-items: center;
    padding: 0 0 ${props => props.$low || 0}px ${props => props.$pad}px;
    background-color: ${props => props.$white ? '#fff' : 'transparent'};

    & + & {
        border-top: 1px solid #eee;
    }
`

const RoundButton = styled.button`
    width: 28px;
    height: 28px;
    margin-right: 10px;
    display: flex;
    align-items: center;
    justify-content: center;
    gap: 3px;
    border: 2px solid #222;
    border-radius: 50%;

    i {
        width: 2px;
        height: 10px;
        background-color: #222;
    }

    b {
        width: 10px;
        height: 10px;
        background-color: #f8393c;
    }
`

const Timer = styled.time`
    width: 74px;
    margin-left: 16px;
    font-family: "Liberation Sans", sans-serif;
    font-size: 14px;
`

const SlotButton = styled.button`
    width: ${props => props.$w}px;
    height: 24px;
    display: flex;
    align-items: center;
    justify-content: center;
    gap: 2px;
    color: ${props => props.$color || '#222'};
`

const Divider = styled.div`
    width: 1px;
    height: 30px;
    margin: 0 ${props => props.$gap || 0}px;
    background-color: #f1f1f1;
`

const SizeSelect = styled.label`
    width: 44px;
    display: flex;
    align-items: center;
    margin-right: 15px;

    select {
        width: 28px;
        appearance: none;
        border: 0;
        padding: 0;
        background: transparent;
        font-size: 10px;
    }
`

const CurrentColor = styled.div`
    width: 22px;
    height: 22px;
    margin-right: 2px;
    background-color: #000;
`

const Swatches = styled.div`
    width: 165px;
    display: grid;
    grid-template-columns: repeat(13, 1fr);
    justify-items: center;
    row-gap: 3px;
`

const Swatch = styled.button`
    width: 10px;
    height: 10px;
    background-color: ${props => props.$color};
    border: 1px solid #bbb;
`

/* ---------- bottom bars ---------- */

const StatusBar = styled.footer`
    height: 15px;
    flex: none;
    display: flex;
    align-items: center;
    padding: 3px 3px 0 0;
    font-size: 10px;
    color: #333;
    background-color: #e9e9e9;
    border-top: 1px solid #888;
`

const StatusCell = styled.span`
    width: ${props => props.$w}px;
    display: flex;
    align-items: center;
    gap: 14px;
`

const Taskbar = styled.nav`
    height: 33px;
    flex: none;
    display: flex;
    align-items: center;
    background-color: #202020;
    color: #fff;
`

const StartButton = styled.button`
    width: 40px;
    display: flex;
    justify-content: center;
`

const TaskSearch = styled.label`
    width: 286px;
    height: 32px;
    display: flex;
    align-items: center;
    gap: 9px;
    padding-left: 10px;
    background-color: #f3f3f3;
    color: #222;

    svg {
        transform: scaleX(-1);
    }

    input {
        flex: 1;
        padding: 0;
        border: 0;
        background: transparent;
        font-size: 12px;
    }

    input::placeholder {
        color: #444;
        opacity: 1;
    }
`

const Apps = styled.div`
    width: 537px;
    height: 33px;
    display: grid;
    grid-template-columns: repeat(13, 1fr);
    justify-items: center;
`

const AppButton = styled.button`
    position: relative;
    width: 34px;
    padding-top: 1px;
    display: flex;
    align-items: center;
    justify-content: center;
    border-bottom: 2px solid ${props => props.$open ? '#76b9ed' : 'transparent'};
`

const Badge = styled.span`
    position: absolute;
    right: -3px;
    bottom: 1px;
    padding: 0 3px;
    line-height: 13px;
    font-size: 10px;
    font-weight: 700;
    background-color: #333;
    border: 1px solid #999;
    border-radius: 8px;
`

const SwTile = styled.span`
    width: 19px;
    height: 19px;
    display: flex;
    flex-direction: column;
    align-items: center;
    background-color: #c4161c;
    font-size: 11px;
    font-weight: 900;
    line-height: 11px;

    small {
        font-size: 6px;
        line-height: 6px;
    }
`

const Tray = styled.div`
    flex: 1;
    display: flex;
    align-items: center;
    justify-content: flex-end;
`

const TraySlot = styled.button`
    width: ${props => props.$w}px;
    display: flex;
    align-items: center;
    justify-content: center;
    font-size: ${props => props.$size || 10}px;
    align-self: ${props => props.$top ? 'flex-start' : 'center'};
`

const Clock = styled.div`
    width: 61px;
    text-align: center;
    font-size: 10px;
    line-height: 15px;
`

const PeekEdge = styled.div`
    width: 4px;
    height: 32px;
    margin-left: 11px;
    border-left: 1px solid #666;
`

/* ---------- data ---------- */

const menus = ['File', 'Edit', 'View', 'Insert', 'Tools', 'Window', 'Help']

const quickTools = [
    { icon: 'doc', w: 25 },
    { icon: 'open', w: 27 },
    { icon: 'save', w: 26 },
    { icon: 'print', w: 26, color: '#333' },
    { icon: 'undo', w: 26 },
    { icon: 'redo', w: 26 },
    { icon: 'pointer', w: 27 },
    { icon: 'light', w: 17, plain: true },
    { icon: 'table', w: 17, plain: true },
    { icon: 'gear', w: 26, color: '#333' },
]

const tabs = [
    ['Features', 53], ['Sketch', 42], ['Surfaces', 50], ['Sheet Metal', 65], ['Weldments', 63],
    ['Mold Tools', 60], ['Data Migration', 80], ['Direct Editing', 73], ['Evaluate', 49],
    ['DimXpert', 55], ['SOLIDWORKS Add-Ins', 115], ['SOLIDWORKS MBD', 102], ['Power Surfacing', 86],
]

const viewTools = ['Front', 'Back', 'Left', 'Right', 'Top', 'Bottom', 'Isometric']
const editTools = ['sketchTool', 'edit', 'hang', 'blocks', 'blocks']

const resources = [
    {
        title: 'Getting Started',
        height: 185,
        links: [
            ['doc', 'New Document'], ['openArrow', 'Open a Document'], ['cap', 'Tutorials'], ['cap', 'Online Training'],
            ['whatsNew', "What's New"], ['introCube', 'Introducing SOLIDWORKS'], ['info', 'General Information'],
        ],
    },
    {
        title: 'SOLIDWORKS Tools',
        height: 164,
        links: [
            ['toolCube', 'Property Tab Builder'], ['toolCube', 'SOLIDWORKS Rx'], ['toolCube', 'Performance Benchmark Test'],
            ['score', 'Compare My Score'], ['wizard', 'Copy Settings Wizard'], ['products', 'My Products'],
        ],
    },
    {
        title: 'Community',
        height: 123,
        links: [['portal', 'Customer Portal'], ['users', 'User Groups'], ['board', '']],
    },
]

const palette = [
    '#000000', '#000080', '#008000', '#0080ff', '#00ff80', '#800000', '#8000ff', '#8080f0', '#80ff80', '#ff0000', '#ff00ff', '#ff8080', '#ffff00',
    '#ffffff', '#0000ff', '#008080', '#00ff00', '#00ffff', '#800080', '#808000', '#80ff00', '#80ffff', '#ff0080', '#ff8000', '#ff80ff', '#ffff80',
]

const apps = [
    { icon: 'ring', size: 17 },
    { icon: 'taskView', size: 17 },
    { icon: 'chrome', size: 20, open: true },
    { icon: 'calc', size: 19 },
    { icon: 'edge', size: 20, open: true },
    { icon: 'explorer', size: 20, open: true },
    { icon: 'store', size: 20 },
    { icon: 'mail', size: 20, badge: '99+' },
    { icon: 'arduino', size: 20 },
    { icon: 'paint', size: 19 },
    { icon: 'max', size: 20, open: true },
    { icon: 'sw', open: true },
    { icon: 'camera', size: 19, open: true },
]

/* ---------- parts ---------- */

const Big = ({ icon, w, label, menu, on }) => (
    <BigButton $w={w} $menu={menu} $on={on}>
        <Icon name={icon} size={14} />
        {label.map(text => <span key={text}>{text}</span>)}
        {menu && <MenuCaret><Icon name="caret" size={5} /></MenuCaret>}
    </BigButton>
)

const Small = ({ w, items }) => (
    <SmallColumn $w={w}>
        {items.map(([icon, text]) => (
            <SmallButton key={text}><Icon name={icon} size={14} />{text}</SmallButton>
        ))}
    </SmallColumn>
)

const Head = () => (
    <TitleBar>
        <MenuArea>
            <Logo>
                <svg width="18" height="18" viewBox="0 0 18 18" fill="none" stroke="#c8372d" strokeWidth="1.600" aria-hidden="true">
                    <path d="M3 2h5L5 7c4 0 4 4-3 8M1 16c5-1 7-5 7-8" />
                    <path d="M16 4c-4-2-7 1-4 4 4 3 2 7-4 7" strokeWidth="2" />
                </svg>
                <span><b>SOLID</b>WORKS</span>
            </Logo>
            <MenuBar>
                {menus.map(name => <MenuItem key={name}>{name}</MenuItem>)}
            </MenuBar>
            <PinSlot><Icon name="pin" size={9} color="#2a7ba5" /></PinSlot>
        </MenuArea>
        <QuickTools>
            {quickTools.map(tool => (
                <QuickButton key={tool.icon} $w={tool.w} aria-label={tool.icon}>
                    <Icon name={tool.icon} size={13} />
                    {!tool.plain && <Icon name="caret" size={5} color={tool.color || '#888'} />}
                </QuickButton>
            ))}
        </QuickTools>
        <DocTitle>Sketch1 of Part1 *</DocTitle>
        <SearchBox>
            <Icon name="console" size={11} />
            <input type="search" aria-label="Search Commands" placeholder="Search Commands" />
            <Icon name="search" size={16} color="#777" />
            <Icon name="caret" size={5} color="#777" />
        </SearchBox>
        <WindowButtons $end={5} $color="#333">
            <HelpMark>?</HelpMark>
            <Icon name="caret" size={5} />
            <button aria-label="Minimize"><Icon name="min" size={8} /></button>
            <button aria-label="Restore"><Icon name="restore" size={10} /></button>
            <button aria-label="Close"><Icon name="close" size={8} /></button>
        </WindowButtons>
    </TitleBar>
)

const Commands = () => (
    <Ribbon>
        <RibbonGroup $w={208} $pad={3}>
            <Big icon="boss" w={48} label={['Extruded', 'Boss/Base']} />
            <Big icon="revolve" w={48} label={['Revolved', 'Boss/Base']} />
            <Small w={108} items={[['sweep', 'Swept Boss/Base'], ['loft', 'Lofted Boss/Base'], ['boss', 'Boundary Boss/Base']]} />
        </RibbonGroup>
        <RibbonGroup $w={226}>
            <Big icon="cut" w={44} label={['Extruded', 'Cut']} />
            <Big icon="hole" w={54} label={['Hole Wizard']} menu />
            <Big icon="revolveCut" w={45} label={['Revolved', 'Cut']} />
            <Small w={82} items={[['hole', 'Swept Cut'], ['cut', 'Lofted Cut'], ['boss', 'Boundary Cut']]} />
        </RibbonGroup>
        <RibbonGroup $w={198}>
            <Big icon="boss" w={27} label={['Fillet']} menu />
            <Big icon="pattern" w={63} label={['Linear Pattern']} menu />
            <Small w={46} items={[['rib', 'Rib'], ['boss', 'Draft'], ['cut', 'Shell']]} />
            <Small w={60} items={[['wrap', 'Wrap'], ['blocks', 'Intersect'], ['mirror', 'Mirror']]} />
        </RibbonGroup>
        <RibbonGroup $w={84}>
            <Big icon="refGeo" w={48} label={['Referenc...']} menu />
            <Big icon="curve" w={34} label={['Curves']} menu />
        </RibbonGroup>
        <RibbonGroup $w={50}>
            <Big icon="instant" w={48} label={['Instant3D']} />
        </RibbonGroup>
        <Big icon="normalTo" w={37} label={['Normal', 'To']} on />
    </Ribbon>
)

const PropertyPanel = () => {
    const [ticked, setTicked] = useState({ '*Current': true })

    return (
        <Panel>
            <PanelGrip><Dot /></PanelGrip>
            <PanelTabs>
                {['part', 'propList', 'tree', 'target', 'ball'].map(name => (
                    <PanelTab key={name} $on={name === 'propList'} aria-label={name}>
                        <Icon name={name} size={13} />
                    </PanelTab>
                ))}
            </PanelTabs>
            <PanelTitle>
                <h2>DXF / DWG Output</h2>
                <Icon name="help" size={11} />
            </PanelTitle>
            <ConfirmRow>
                <button aria-label="OK"><Icon name="check" size={11} /></button>
                <button aria-label="Cancel"><Icon name="cross" size={11} /></button>
            </ConfirmRow>

            <Section $h={58}>
                <SectionHead><h3>Export</h3><Icon name="up" size={8} /></SectionHead>
                <Choice $h={16} $pad={20}><input type="radio" name="what" disabled />Faces / loops / edges</Choice>
                <Choice $h={17} $pad={20}><input type="radio" name="what" defaultChecked disabled />Annotation views</Choice>
            </Section>

            <Section $h={99}>
                <SectionHead><h3>Views To Export</h3><Icon name="up" size={8} /></SectionHead>
                <ViewList>
                    <ul>
                        {['*Current', '*Front', '*Back', '*Left'].map(name => (
                            <li key={name}>
                                <Choice $h={14} $pad={3} $dark>
                                    <TickBox>
                                        <input
                                            type="checkbox"
                                            checked={!!ticked[name]}
                                            onChange={e => setTicked({ ...ticked, [name]: e.target.checked })}
                                        />
                                        {ticked[name] && <Icon name="check" size={9} />}
                                    </TickBox>
                                    {name}
                                </Choice>
                            </li>
                        ))}
                    </ul>
                    <ListScroll>
                        <Icon name="up" size={8} />
                        <ListThumb />
                        <Icon name="down" size={8} />
                    </ListScroll>
                </ViewList>
                <Choice $h={13} $pad={34}><input type="checkbox" disabled />Select All</Choice>
            </Section>

            <Section $h={98}>
                <SectionHead><h3>Output Alignment</h3><Icon name="up" size={8} /></SectionHead>
                <Field $w={131}>
                    <FieldName $w={20}><Icon name="triad" size={13} /></FieldName>
                    <input aria-label="Origin" />
                </Field>
                <Field $w={77}>
                    <FieldName $w={50}>X axis :</FieldName>
                    <input />
                    <Icon name="flip" size={11} />
                </Field>
                <Field $w={77}>
                    <FieldName $w={50}>Y axis :</FieldName>
                    <input />
                    <Icon name="flip" size={11} />
                </Field>
            </Section>

            <Section $h={60}>
                <SectionHead><h3>Export Options</h3><Icon name="up" size={8} /></SectionHead>
                <Choice $h={16} $pad={20}><input type="radio" name="files" defaultChecked disabled />Single file</Choice>
                <Choice $h={21} $pad={20}><input type="radio" name="files" disabled />Separate files</Choice>
            </Section>
        </Panel>
    )
}

const Resources = () => (
    <TaskPane>
        <PaneHeader>
            <span>»</span>
            <h2>SOLIDWORKS Resources</h2>
            <Icon name="pin" size={11} />
        </PaneHeader>
        <PaneBody>
            <PaneList>
                {resources.map(group => (
                    <PaneSection key={group.title} $h={group.height}>
                        <PaneHead>
                            <h3>{group.title}</h3>
                            <Icon name="up" size={8} />
                        </PaneHead>
                        {group.links.map(([icon, text]) => (
                            <ResourceLink key={text} href="#" aria-label={text || icon}>
                                <Icon name={icon} size={14} />
                                {text}
                            </ResourceLink>
                        ))}
                    </PaneSection>
                ))}
                <PaneSection $h={20} />
            </PaneList>
            <ScrollY>
                <button aria-label="Scroll up"><Icon name="up" size={11} /></button>
                <ThumbY />
                <ScrollRest />
                <button aria-label="Scroll down"><Icon name="down" size={11} /></button>
            </ScrollY>
        </PaneBody>
        <ScrollX>
            <Icon name="left" size={12} />
            <ThumbX />
            <Icon name="right" size={12} />
        </ScrollX>
    </TaskPane>
)

const Cleanup = () => (
    <Dialog role="dialog" aria-label="DXF/DWG Cleanup">
        <DialogTitle>DXF/DWG Cleanup - *Current</DialogTitle>
        <DialogTools>
            {['broom', 'zoomFit', 'zoomArea', 'zoomInOut', 'pan'].map(name => (
                <ToolButton key={name} aria-label={name}><Icon name={name} size={13} /></ToolButton>
            ))}
        </DialogTools>
        <Drawing viewBox="0 0 424 351" height="353">
            <g transform="translate(-428 -176)" fill="none">
                <path d="M525.500 501V295.500A115 115 0 0 1 755.500 295.500V525.500H547" stroke="#e8e8e8" />
                <path d="M525.500 525.500V508M522.500 512l3-4 3 4M525.500 525.500H542M538 522.500l4 3-4 3" stroke="#35c435" strokeWidth="1.200" />
                <path d="M523 501l2.500 2 2.500-2M525.500 503v4M544 525.500h3" stroke="#1818c0" />
            </g>
        </Drawing>
        <DialogActions>
            <DialogButton $w={105}>Remove Entities</DialogButton>
            <ToolButton $flat aria-label="Undo"><Icon name="undo" size={13} color="#6d9bcb" /></ToolButton>
            <ToolButton $flat aria-label="Redo"><Icon name="redo" size={13} color="#6d9bcb" /></ToolButton>
            <Spacer />
            <DialogButton $w={58} $on>
                Save
                <Cursor width="9" height="13" viewBox="0 0 9 13" aria-hidden="true">
                    <path d="M.5.5v10l2.500-2 1.500 3.500 1.500-.7-1.500-3.300h3.500z" fill="#fff" stroke="#333" />
                </Cursor>
            </DialogButton>
            <DialogButton $w={57}>Cancel</DialogButton>
        </DialogActions>
    </Dialog>
)

const RecorderBox = () => (
    <Recorder>
        <RecorderRow $h={41} $pad={10} $low={2} $white>
            <RoundButton aria-label="Pause"><i /><i /></RoundButton>
            <RoundButton aria-label="Stop"><b /></RoundButton>
            <Timer>00:04:13</Timer>
            <Divider />
            <SlotButton $w={32} aria-label="Move"><Icon name="grip" size={14} /></SlotButton>
            <SlotButton $w={26} aria-label="Sound"><Icon name="speaker" size={18} /></SlotButton>
            <SlotButton $w={32} aria-label="Microphone" $color="#999"><Icon name="micOff" size={15} /></SlotButton>
            <SlotButton $w={34} aria-label="Webcam"><Icon name="camOff" size={14} /><Icon name="caret" size={6} /></SlotButton>
            <SlotButton $w={30} aria-label="Draw"><Icon name="sign" size={17} /></SlotButton>
            <SlotButton $w={26} aria-label="Minimize"><Icon name="dash" size={11} /></SlotButton>
        </RecorderRow>
        <RecorderRow $h={40} $pad={3}>
            <SlotButton $w={27} aria-label="Rectangle"><Icon name="rect" size={18} /></SlotButton>
            <SlotButton $w={27} aria-label="Ellipse"><Icon name="ellipse" size={18} /></SlotButton>
            <SlotButton $w={25} aria-label="Line"><Icon name="diagonal" size={18} /></SlotButton>
            <SlotButton $w={25} aria-label="Arrow"><Icon name="arrow" size={17} /></SlotButton>
            <SlotButton $w={25} aria-label="Brush"><Icon name="brush" size={17} /></SlotButton>
            <SlotButton $w={24} aria-label="Pencil"><Icon name="pencil" size={17} /></SlotButton>
            <SlotButton $w={23} aria-label="Text" $color="#1a93dd"><Icon name="text" size={18} /></SlotButton>
            <Divider $gap={5} />
            <SlotButton $w={28} aria-label="Undo"><Icon name="back" size={16} /></SlotButton>
            <SlotButton $w={22} aria-label="Eraser"><Icon name="eraser" size={17} /></SlotButton>
        </RecorderRow>
        <RecorderRow $h={42} $pad={4} $low={6}>
            <SlotButton $w={27} aria-label="Font"><Icon name="text" size={23} /></SlotButton>
            <SizeSelect>
                <select aria-label="Text size" defaultValue="20">
                    <option>20</option>
                </select>
                <Icon name="caret" size={6} />
            </SizeSelect>
            <CurrentColor />
            <Swatches>
                {palette.map(color => <Swatch key={color} $color={color} aria-label={color} />)}
            </Swatches>
        </RecorderRow>
    </Recorder>
)

const BottomBar = () => (
    <Taskbar>
        <StartButton aria-label="Start"><Icon name="windows" size={14} /></StartButton>
        <TaskSearch>
            <Icon name="search" size={14} />
            <input aria-label="Type here to search" placeholder="Type here to search" />
        </TaskSearch>
        <Apps>
            {apps.map(app => (
                <AppButton key={app.icon} $open={app.open} aria-label={app.icon}>
                    {app.icon === 'sw' ? <SwTile>SW<small>2017</small></SwTile> : <Icon name={app.icon} size={app.size} />}
                    {app.badge && <Badge>{app.badge}</Badge>}
                </AppButton>
            ))}
        </Apps>
        <Tray>
            <TraySlot $w={38}>Desktop</TraySlot>
            <TraySlot $w={16} $size={14} $top>»</TraySlot>
            <TraySlot $w={42}><Icon name="people" size={14} /></TraySlot>
            <TraySlot $w={20}><Icon name="up" size={11} /></TraySlot>
            <TraySlot $w={20}><Icon name="device" size={13} /></TraySlot>
            <TraySlot $w={20}><Icon name="wifi" size={12} /></TraySlot>
            <TraySlot $w={20}><Icon name="waves" size={13} /></TraySlot>
            <TraySlot $w={25}>
                <svg width="21" height="13" viewBox="0 0 21 13" fill="none" stroke="#fff" aria-hidden="true">
                    <path d="M.5.500h20v12H.5z" />
                    <path d="M3 4h15M3 6.500h15" strokeDasharray="1.500 1" strokeWidth="1.400" />
                    <path d="M3 9.500h2M7 9.500h8M16 9.500h2" strokeWidth="1.400" />
                </svg>
            </TraySlot>
            <TraySlot $w={31}>ENG</TraySlot>
            <Clock>6:57 AM<br />4/30/2021</Clock>
            <TraySlot $w={25}><Icon name="note" size={15} /></TraySlot>
            <PeekEdge />
        </Tray>
    </Taskbar>
)

const App = () => (
    <Page>
        <GlobalStyle />
        <Head />
        <ToolStrip>
            <ToolGroup>
                {['plane', 'axis', 'triad', 'point', 'com', 'mate'].map(name => (
                    <button key={name} aria-label={name}><Icon name={name} size={12} /></button>
                ))}
            </ToolGroup>
        </ToolStrip>
        <Commands />
        <Workspace>
            <Editor>
                <TabRow>
                    {tabs.map(([name, w], i) => <Tab key={name} $w={w} $on={i === 0}>{name}</Tab>)}
                    <Spacer />
                    <WindowButtons $end={9} $color="#8b9099">
                        <Icon name="paneLeft" size={9} />
                        <Icon name="paneRight" size={9} />
                        <Icon name="min" size={8} />
                        <Icon name="restore" size={10} />
                        <Icon name="close" size={8} />
                    </WindowButtons>
                </TabRow>
                <Body>
                    <Rail>
                        <RailGroup $dotted>
                            {viewTools.map(name => <button key={name} aria-label={name}><Icon name="viewCube" size={14} /></button>)}
                        </RailGroup>
                        <RailGroup>
                            {editTools.map((name, i) => <button key={i} aria-label={name}><Icon name={name} size={14} /></button>)}
                        </RailGroup>
                    </Rail>
                    <PropertyPanel />
                    <Viewport>
                        <SplitGrip><Dot /></SplitGrip>
                        <FeatureTree>
                            <Icon name="play" size={8} color="#111" />
                            <Icon name="part" size={13} />
                            {'Part1  (Default<<De...'}
                        </FeatureTree>
                        <AxisMark width="42" height="46" viewBox="0 0 42 46" aria-hidden="true">
                            <path d="M11 38V17" stroke="#3f9b3f" strokeWidth="3" />
                            <path d="M7 18l4-9 4 9z" fill="#176b17" />
                            <path d="M11 38h18" stroke="#d65a5a" strokeWidth="3" />
                            <path d="M28 34l8 4-8 4z" fill="#b31616" />
                            <circle cx="11" cy="38" r="4" fill="#12128f" />
                            <text x="8" y="8" fontSize="9" fill="#3f8a4a">Y</text>
                            <text x="36" y="41" fontSize="9" fill="#cf4040">X</text>
                        </AxisMark>
                        <ViewName>*Front</ViewName>
                        <Confirm $right={53} $top={5} aria-label="Accept"><Icon name="bigCheck" size={19} color="#abcbb0" /></Confirm>
                        <Confirm $right={25} $top={24} aria-label="Discard"><Icon name="bigCross" size={18} color="#d6a8b0" /></Confirm>
                        <SideTabs>
                            {['home', 'library', 'folder', 'palette', 'ball', 'propList', 'chat'].map(name => (
                                <SideTab key={name} $on={name === 'home'} aria-label={name}><Icon name={name} size={13} /></SideTab>
                            ))}
                        </SideTabs>
                    </Viewport>
                </Body>
                <SheetRow>
                    <SheetNav>
                        {['First', 'Previous', 'Next', 'Last'].map(name => (
                            <button key={name} aria-label={name}><Icon name="play" size={8} /></button>
                        ))}
                    </SheetNav>
                    <Tab $w={50} $on>Model</Tab>
                    <Tab $w={59}>3D Views</Tab>
                    <Tab $w={96} $end={8}>Motion Study 1</Tab>
                </SheetRow>
            </Editor>
            <Resources />
            <Cleanup />
        </Workspace>
        <StatusBar>
            <span>SOLIDWORKS Premium 2017 x64 Edition</span>
            <Spacer />
            <StatusCell $w={116}>Under Defined</StatusCell>
            <StatusCell $w={92}>MMGS<Icon name="caret" size={5} /></StatusCell>
            <Icon name="tag" size={12} />
        </StatusBar>
        <BottomBar />
        <RecorderBox />
    </Page>
)

export default App
